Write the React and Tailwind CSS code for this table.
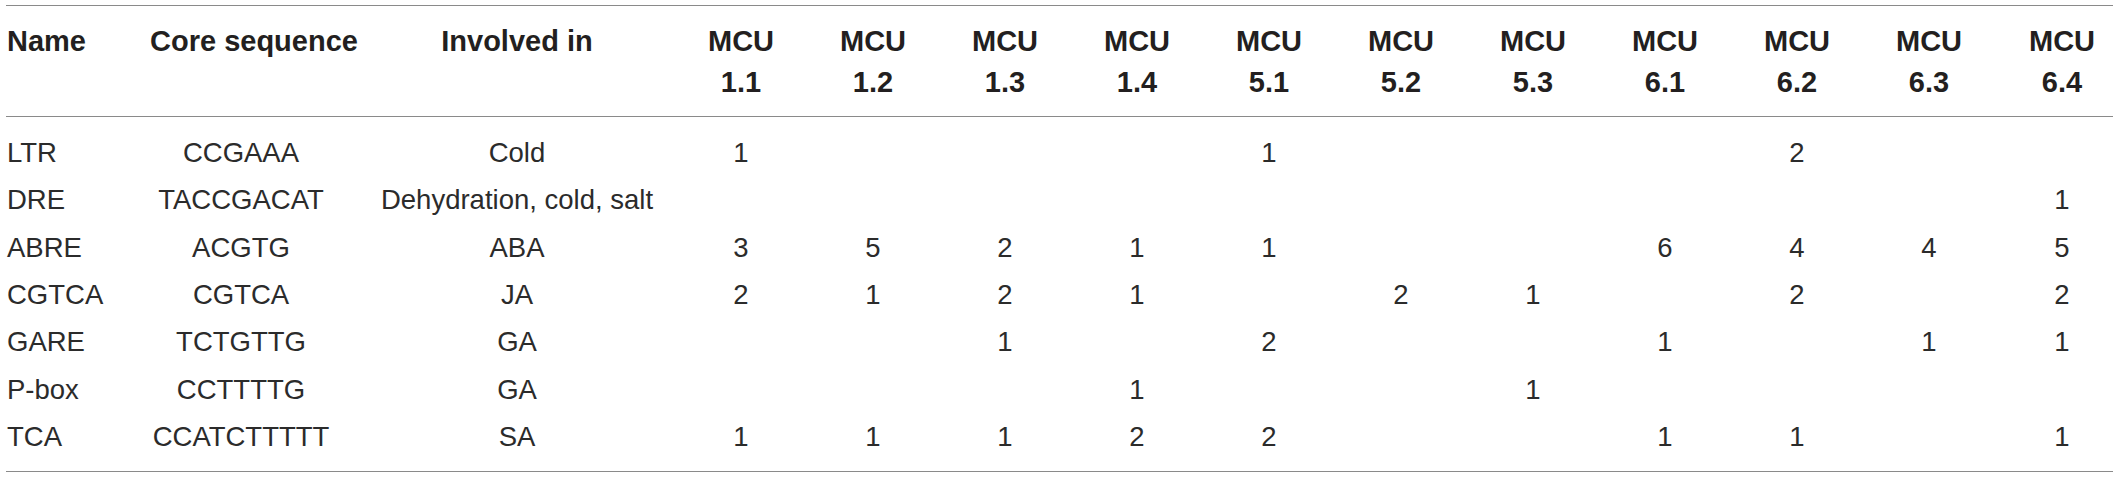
const mcus = ["1.1", "1.2", "1.3", "1.4", "5.1", "5.2", "5.3", "6.1", "6.2", "6.3", "6.4"];

const rows = [
  ["LTR", "CCGAAA", "Cold", ["1", "", "", "", "1", "", "", "", "2", "", ""]],
  ["DRE", "TACCGACAT", "Dehydration, cold, salt", ["", "", "", "", "", "", "", "", "", "", "1"]],
  ["ABRE", "ACGTG", "ABA", ["3", "5", "2", "1", "1", "", "", "6", "4", "4", "5"]],
  ["CGTCA", "CGTCA", "JA", ["2", "1", "2", "1", "", "2", "1", "", "2", "", "2"]],
  ["GARE", "TCTGTTG", "GA", ["", "", "1", "", "2", "", "", "1", "", "1", "1"]],
  ["P-box", "CCTTTTG", "GA", ["", "", "", "1", "", "", "1", "", "", "", ""]],
  ["TCA", "CCATCTTTTT", "SA", ["1", "1", "1", "2", "2", "", "", "1", "1", "", "1"]],
];

export default function App() {
  return (
    <div className="w-[2118px] h-[477px] bg-white pt-[5px] pl-[6px] font-['Liberation_Sans',Arial,sans-serif] text-[#231f20]">
      <table className="table-fixed border-collapse w-[2107px]">
        <colgroup>
          <col className="w-[144px]" />
          <col className="w-[182px]" />
          <col className="w-[343px]" />
          {mcus.slice(0, 10).map((m) => (
            <col key={m} className="w-[132px]" />
          ))}
          <col className="w-[118px]" />
        </colgroup>
        <thead>
          <tr className="border-y border-[#8a8a8a] text-[29px] leading-[41px] font-bold">
            <th className="align-top text-left pl-[1px] pt-[15px] pb-[13px] whitespace-nowrap">Name</th>
            <th className="align-top text-center pt-[15px] pb-[13px] whitespace-nowrap">Core sequence</th>
            <th className="align-top text-center pl-[27px] pt-[15px] pb-[13px] whitespace-nowrap">Involved in</th>
            {mcus.map((m, i) => (
              <th
                key={m}
                className={`align-top text-center pt-[15px] pb-[13px] ${i === 10 ? "pl-[16px]" : ""}`}
              >
                MCU
                <br />
                {m}
              </th>
            ))}
          </tr>
        </thead>
        <tbody className="text-[27.5px] leading-[47.33px] text-[#2b2b2b]">
          {rows.map(([name, seq, inv, vals], r) => {
            const pad = r === 0 ? "pt-[12px]" : r === rows.length - 1 ? "pb-[11px]" : "";
            return (
              <tr key={name} className={r === rows.length - 1 ? "border-b border-[#8a8a8a]" : ""}>
                <td className={`text-left pl-[1px] whitespace-nowrap ${pad}`}>{name}</td>
                <td className={`text-center whitespace-nowrap ${pad}`}>{seq}</td>
                <td className={`text-center pl-[27px] whitespace-nowrap ${pad}`}>{inv}</td>
                {vals.map((v, i) => (
                  <td key={i} className={`text-center ${i === 10 ? "pl-[16px]" : ""} ${pad}`}>
                    {v}
                  </td>
                ))}
              </tr>
            );
          })}
        </tbody>
      </table>
    </div>
  );
}
